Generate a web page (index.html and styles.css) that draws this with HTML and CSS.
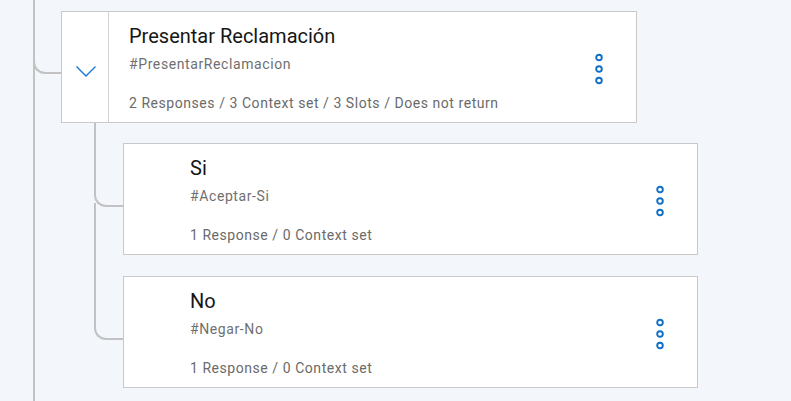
FILE: index.html
```html
<!DOCTYPE html>
<html lang="es">
<head>
<meta charset="utf-8">
<title>Dialog tree</title>
<link rel="stylesheet" href="styles.css">
</head>
<body>
<div class="trunk">
  <div class="node node--root">
    <div class="card">
      <div class="card__toggle">
        <svg class="chevron" width="20" height="11" viewBox="0 0 20 11"><path d="M0.5 0.5 L10 10 L19.5 0.5" fill="none" stroke="currentColor" stroke-width="1.4"/></svg>
      </div>
      <div class="card__body">
        <div class="card__title">Presentar Reclamación</div>
        <div class="card__id">#PresentarReclamacion</div>
        <div class="card__meta">2 Responses / 3 Context set / 3 Slots / Does not return</div>
      </div>
      <div class="card__menu">
        <svg width="10" height="32" viewBox="0 0 10 32"><circle cx="5" cy="4.5" r="2.8" fill="none" stroke="currentColor" stroke-width="1.9"/><circle cx="5" cy="16" r="2.8" fill="none" stroke="currentColor" stroke-width="1.9"/><circle cx="5" cy="27.5" r="2.8" fill="none" stroke="currentColor" stroke-width="1.9"/></svg>
      </div>
    </div>
    <div class="children">
      <div class="node node--child">
        <div class="card card--child">
          <div class="card__toggle card__toggle--empty"></div>
          <div class="card__body">
            <div class="card__title">Si</div>
            <div class="card__id">#Aceptar-Si</div>
            <div class="card__meta">1 Response / 0 Context set</div>
          </div>
          <div class="card__menu">
            <svg width="10" height="32" viewBox="0 0 10 32"><circle cx="5" cy="4.5" r="2.8" fill="none" stroke="currentColor" stroke-width="1.9"/><circle cx="5" cy="16" r="2.8" fill="none" stroke="currentColor" stroke-width="1.9"/><circle cx="5" cy="27.5" r="2.8" fill="none" stroke="currentColor" stroke-width="1.9"/></svg>
          </div>
        </div>
      </div>
      <div class="node node--child">
        <div class="card card--child">
          <div class="card__toggle card__toggle--empty"></div>
          <div class="card__body">
            <div class="card__title">No</div>
            <div class="card__id">#Negar-No</div>
            <div class="card__meta">1 Response / 0 Context set</div>
          </div>
          <div class="card__menu">
            <svg width="10" height="32" viewBox="0 0 10 32"><circle cx="5" cy="4.5" r="2.8" fill="none" stroke="currentColor" stroke-width="1.9"/><circle cx="5" cy="16" r="2.8" fill="none" stroke="currentColor" stroke-width="1.9"/><circle cx="5" cy="27.5" r="2.8" fill="none" stroke="currentColor" stroke-width="1.9"/></svg>
          </div>
        </div>
      </div>
    </div>
  </div>
</div>
</body>
</html>
```

FILE: styles.css
```css
* { box-sizing: border-box; }
html, body { margin: 0; padding: 0; }
body {
  background: #f3f6fb;
  font-family: Roboto, "Noto Sans", sans-serif;
  height: 401px;
  overflow: hidden;
}
.trunk {
  margin-left: 33px;
  border-left: 2px solid #c2c2c2;
  min-height: 401px;
  padding: 11px 0 0 26px;
}
.node { position: relative; }
.node--root::before {
  content: "";
  position: absolute;
  left: -28px;
  top: 21px;
  width: 28px;
  height: 40px;
  border-left: 2px solid #c2c2c2;
  border-bottom: 2px solid #c2c2c2;
  border-bottom-left-radius: 12px;
}
.card {
  position: relative;
  display: flex;
  width: 576px;
  height: 112px;
  background: #fff;
  border: 1px solid #c9c9c9;
}
.card--child { width: 575px; }
.card__toggle {
  width: 47px;
  flex: none;
  border-right: 1px solid #d4d4d4;
  padding: 54px 0 0 14px;
  color: #1479d6;
}
.card__toggle--empty {
  width: 46px;
  border-right-color: transparent;
}
.chevron { display: block; }
.card__body {
  flex: 1;
  padding: 12px 0 0 20px;
}
.card__title {
  font-size: 20px;
  line-height: 24px;
  color: #161616;
}
.card__id {
  margin-top: 7px;
  font-size: 14px;
  line-height: 18px;
  letter-spacing: 0.6px;
  color: #6f6f6f;
}
.card__meta {
  margin-top: 21px;
  font-size: 14px;
  line-height: 18px;
  letter-spacing: 0.55px;
  color: #6a6a6a;
}
.card__menu {
  align-self: center;
  margin: 4px 32px 0 0;
  color: #0f6fc6;
}
.card__menu svg { display: block; }
.children {
  margin-left: 33px;
  padding: 20px 0 0 29px;
  display: flex;
  flex-direction: column;
  gap: 21px;
}
.node--child::before {
  content: "";
  position: absolute;
  left: -29px;
  top: -20px;
  width: 29px;
  height: 82px;
  border-left: 2px solid #c2c2c2;
  border-bottom: 2px solid #c2c2c2;
  border-bottom-left-radius: 12px;
}
.node--child:not(:last-child)::after {
  content: "";
  position: absolute;
  left: -29px;
  top: 60px;
  bottom: -21px;
  border-left: 2px solid #c2c2c2;
}
```
